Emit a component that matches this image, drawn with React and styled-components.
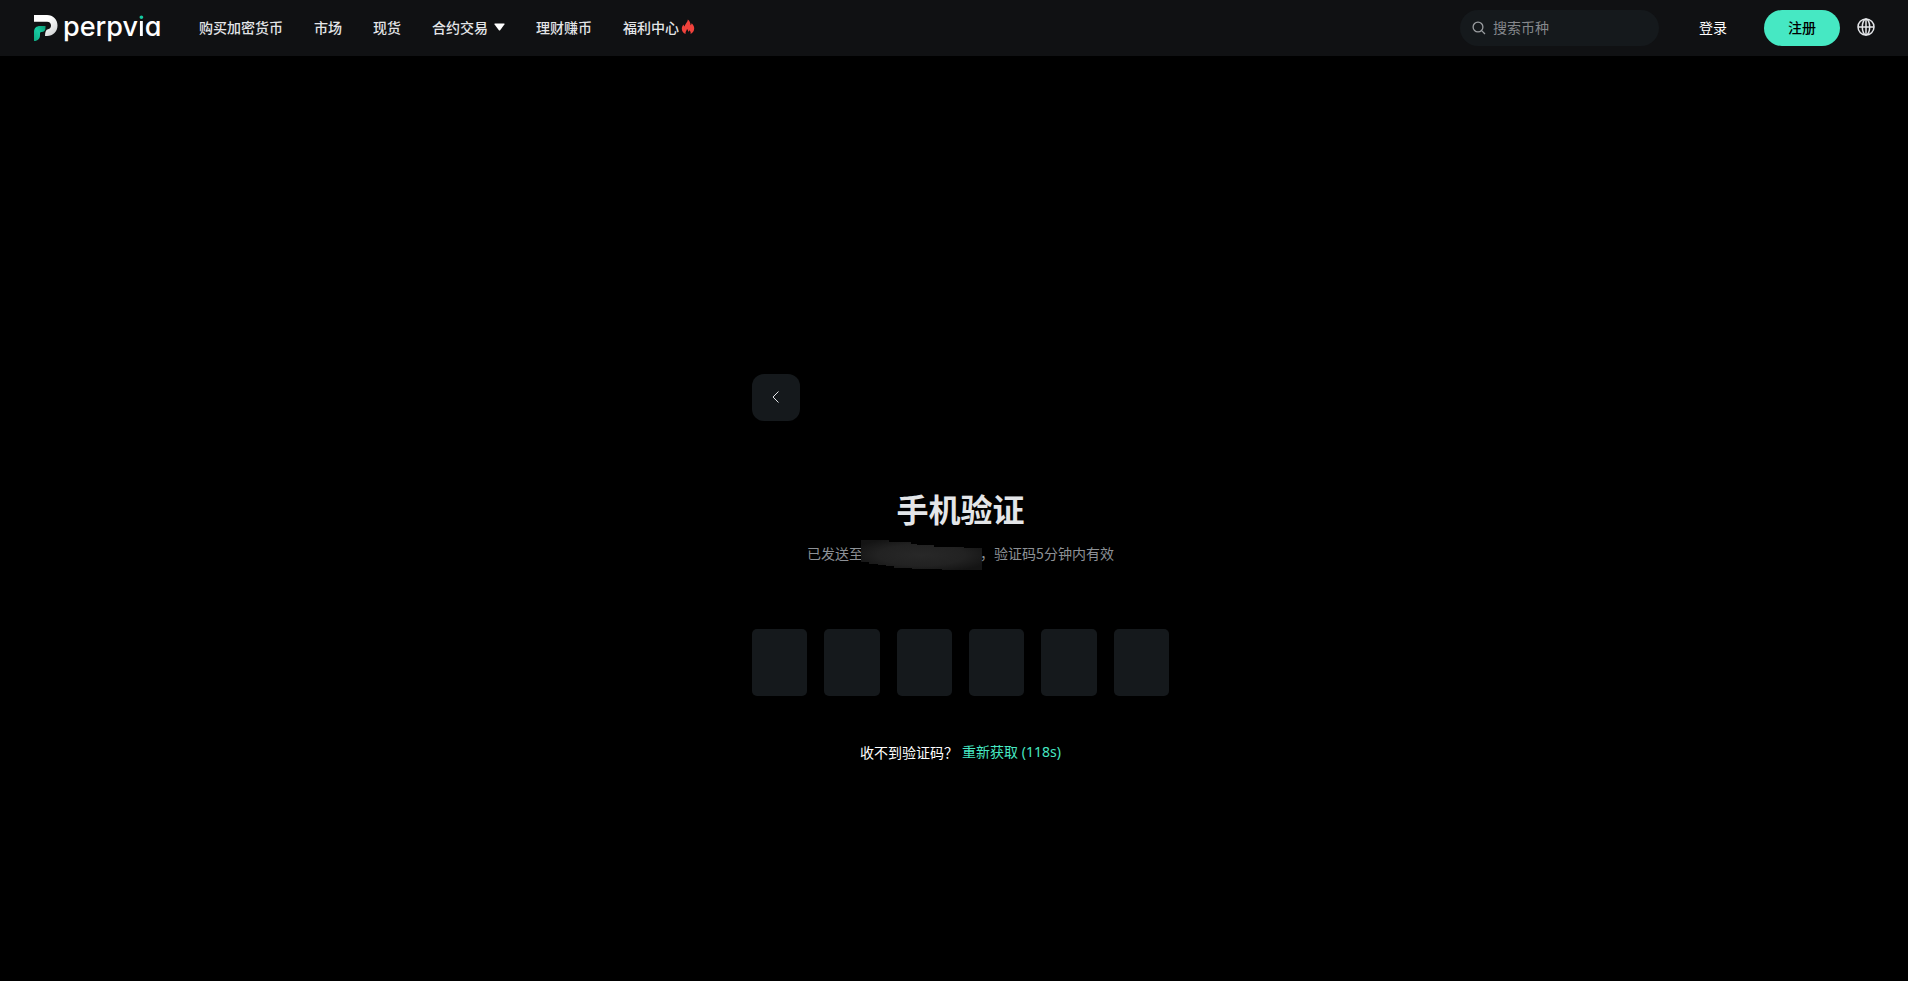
import React, { useState } from "react"
import styled, { createGlobalStyle } from "styled-components"

const GlobalStyle = createGlobalStyle`
  * {
    box-sizing: border-box;
  }
  body {
    margin: 0;
    background: #000;
    color: #fff;
    font-family: "Noto Sans CJK SC", "Noto Sans", sans-serif;
    font-size: 14px;
    line-height: 20px;
  }
  button,
  input {
    border: 0;
    padding: 0;
    font: inherit;
    color: inherit;
  }
  button {
    cursor: pointer;
  }
  a {
    color: inherit;
    text-decoration: none;
  }
`

const Page = styled.div`
  display: flex;
  flex-direction: column;
  min-height: 100vh;
`

const Header = styled.header`
  display: flex;
  align-items: center;
  height: 56px;
  padding: 0 33px 0 34px;
  background: #101113;
`

const Logo = styled.a`
  display: flex;
  align-items: center;
  gap: 5px;
  margin-right: 37px;
  svg {
    display: block;
  }
`

const Wordmark = styled.span`
  width: 99px;
  padding-bottom: 2px;
  font-family: Inter, sans-serif;
  font-size: 27px;
  font-weight: 500;
  line-height: 26px;
  font-feature-settings: "cv11";
  em {
    font-style: normal;
    color: transparent;
    background: linear-gradient(#14c9a0 11px, #fff 11px);
    background-clip: text;
  }
`

const Nav = styled.nav`
  display: flex;
  align-items: center;
  gap: 31px;
`

const NavLink = styled.a`
  display: flex;
  align-items: center;
  gap: ${props => props.$gap || "0"};
  padding-bottom: 2px;
  color: #e3e5e8;
  font-weight: 500;
  white-space: nowrap;
`

const Actions = styled.div`
  display: flex;
  align-items: center;
  margin-left: auto;
`

const Search = styled.label`
  display: flex;
  align-items: center;
  gap: 7px;
  width: 199px;
  height: 36px;
  margin-right: 40px;
  padding: 0 12px;
  border-radius: 18px;
  background: #15191c;
  svg {
    flex-shrink: 0;
  }
  input {
    width: 100%;
    min-width: 0;
    padding-bottom: 2px;
    outline: 0;
    background: transparent;
  }
  input::placeholder {
    color: #85888c;
    opacity: 1;
  }
`

const LoginLink = styled.a`
  padding-bottom: 2px;
`

const RegisterButton = styled.button`
  width: 76px;
  height: 36px;
  margin: 0 17px 0 37px;
  padding-bottom: 2px;
  border-radius: 18px;
  background: #46e8c3;
  color: #000;
  font-weight: 500;
`

const LanguageButton = styled.button`
  display: flex;
  padding-bottom: 3px;
  background: transparent;
  color: #e3e5e8;
`

const Main = styled.main`
  display: flex;
  flex: 1;
  align-items: center;
  justify-content: center;
  padding: 98px 0 0 13px;
`

const Panel = styled.section`
  display: flex;
  flex-direction: column;
  align-items: center;
  width: 417px;
`

const BackButton = styled.button`
  display: flex;
  align-items: center;
  justify-content: center;
  align-self: flex-start;
  width: 48px;
  height: 47px;
  border-radius: 12px;
  background: #15191c;
  color: #e3e5e8;
`

const Title = styled.h1`
  margin: 63px 0 0;
  color: #e3e5e8;
  font-size: 32px;
  font-weight: 700;
  line-height: 48px;
`

const Hint = styled.p`
  display: flex;
  align-items: flex-start;
  margin: 8px 0 0;
  color: #8d9196;
  line-height: 26px;
  white-space: nowrap;
  svg {
    display: block;
    margin: 0 -2px;
  }
`

const CodeRow = styled.div`
  display: grid;
  grid-template-columns: repeat(6, 1fr);
  gap: 17px;
  width: 100%;
  margin-top: 59px;
`

const CodeInput = styled.input`
  width: 100%;
  height: 67px;
  border-radius: 5px;
  outline: 0;
  background: #15191c;
  font-size: 24px;
  text-align: center;
`

const Resend = styled.div`
  display: flex;
  gap: 4px;
  margin-top: 46px;
  button {
    background: transparent;
    color: #46e8c3;
    font-family: "Noto Sans", "Noto Sans CJK SC", sans-serif;
  }
`

const LogoMark = () => (
  <svg width="24" height="26" viewBox="0 0 24 26" aria-hidden="true">
    <defs>
      <linearGradient id="mark-white" x1="0" y1="0" x2="1" y2="1">
        <stop offset="0.4" stopColor="#fff" />
        <stop offset="1" stopColor="#c9cccd" />
      </linearGradient>
      <linearGradient id="mark-green" x1="1" y1="0" x2="0" y2="1">
        <stop offset="0" stopColor="#0c9873" />
        <stop offset="0.5" stopColor="#16cba2" />
        <stop offset="1" stopColor="#0ea881" />
      </linearGradient>
    </defs>
    <path
      d="M0 0H13C19 0 23.500 4.500 23.500 10.500S19 21 13 21H11C11 17 12 14.500 14 14.300C16 13.800 17 12.500 17 10.500C17 8 15.500 6.700 13 6.700H0Z"
      fill="url(#mark-white)"
    />
    <path
      d="M0 26V17C0 13 2.500 11 6 11H11.500V13C11.500 15.500 10 17 7.500 17C6.500 17 6 17.500 6 18.500V20C6 23.500 4 26 0 26Z"
      fill="url(#mark-green)"
    />
  </svg>
)

const CaretDown = () => (
  <svg width="11" height="8" viewBox="0 0 11 8" aria-hidden="true">
    <path d="M1 .5H10Q11 .5 10.400 1.400L6.300 7Q5.500 8 4.700 7L.6 1.400Q0 .5 1 .5Z" fill="#fff" />
  </svg>
)

const Flame = () => (
  <svg width="14" height="16" viewBox="0 0 14 16" aria-hidden="true">
    <path
      d="M6.800 .5C8.600 1.800 9.600 3.800 9.500 6.300C10.100 5.900 10.500 5.200 10.700 4.200C12.300 5.600 13.200 7.500 13.200 9.500C13.200 12 11.800 14 9.500 15C10 13.500 9.500 12.200 8.400 11.200C8.200 12 7.800 12.500 7.200 12.800C7.200 11.500 6.800 10.600 6 10C5.800 11.600 4.500 12.400 4.500 14C4.500 14.400 4.600 14.700 4.700 15C2.300 14.200 .8 12.200 .8 9.800C.8 8 1.500 6.600 2.400 5.400C2.700 6.500 3.100 7.200 3.700 7.600C3.800 4.800 6.800 3.400 6.800 .5Z"
      fill="#f0423c"
    />
  </svg>
)

const SearchIcon = () => (
  <svg width="14" height="14" viewBox="0 0 14 14" fill="none" stroke="#9a9da0" strokeWidth="1.300" aria-hidden="true">
    <circle cx="6" cy="6" r="4.900" />
    <path d="M9.600 9.600L13 13" />
  </svg>
)

const Globe = () => (
  <svg width="18" height="18" viewBox="0 0 18 18" fill="none" stroke="currentColor" strokeWidth="1.500" aria-hidden="true">
    <circle cx="9" cy="9" r="8" />
    <ellipse cx="9" cy="9" rx="3.700" ry="8" />
    <path d="M1 9H17M9 1V17" />
  </svg>
)

const ChevronLeft = () => (
  <svg width="8" height="12" viewBox="0 0 8 12" fill="none" stroke="currentColor" aria-hidden="true">
    <path d="M6.500 .5L1 6L6.500 11.500" />
  </svg>
)

// smudge that hides the phone number
const HiddenNumber = () => (
  <svg width="121" height="30" viewBox="0 0 121 30" role="img" aria-label="***">
    <defs>
      <radialGradient id="smudge" cx="0.5" cy="0.5" r="0.6">
        <stop offset="0" stopColor="#282828" />
        <stop offset="0.6" stopColor="#222" />
        <stop offset="1" stopColor="#141414" />
      </radialGradient>
    </defs>
    <path
      d="M0 0H28V2H50V4H56V5H73V7H103V8H121V30H81V29H51V28H33V26H25V25H17V24H8V22H0Z"
      fill="url(#smudge)"
    />
  </svg>
)

const App = () => {
  const [code, setCode] = useState(["", "", "", "", "", ""])

  const handleChange = (index, value) => {
    setCode(code.map((digit, i) => (i === index ? value : digit)))
  }

  return (
    <Page>
      <GlobalStyle />
      <Header>
        <Logo href="#">
          <LogoMark />
          <Wordmark>
            perpv<em>i</em>a
          </Wordmark>
        </Logo>
        <Nav>
          <NavLink href="#">购买加密货币</NavLink>
          <NavLink href="#">市场</NavLink>
          <NavLink href="#">现货</NavLink>
          <NavLink href="#" $gap="6px">
            合约交易
            <CaretDown />
          </NavLink>
          <NavLink href="#">理财赚币</NavLink>
          <NavLink href="#" $gap="2px">
            福利中心
            <Flame />
          </NavLink>
        </Nav>
        <Actions>
          <Search>
            <SearchIcon />
            <input type="text" placeholder="搜索币种" aria-label="搜索币种" />
          </Search>
          <LoginLink href="#">登录</LoginLink>
          <RegisterButton type="button">注册</RegisterButton>
          <LanguageButton type="button" aria-label="语言">
            <Globe />
          </LanguageButton>
        </Actions>
      </Header>
      <Main>
        <Panel>
          <BackButton type="button" aria-label="返回">
            <ChevronLeft />
          </BackButton>
          <Title>手机验证</Title>
          <Hint>
            已发送至
            <HiddenNumber />
            ，验证码5分钟内有效
          </Hint>
          <CodeRow>
            {code.map((digit, index) => (
              <CodeInput
                key={index}
                type="text"
                inputMode="numeric"
                maxLength={1}
                aria-label={`验证码 ${index + 1}`}
                value={digit}
                onChange={e => handleChange(index, e.target.value)}
              />
            ))}
          </CodeRow>
          <Resend>
            <span>收不到验证码？</span>
            <button type="button">重新获取 (118s)</button>
          </Resend>
        </Panel>
      </Main>
    </Page>
  )
}

export default App
